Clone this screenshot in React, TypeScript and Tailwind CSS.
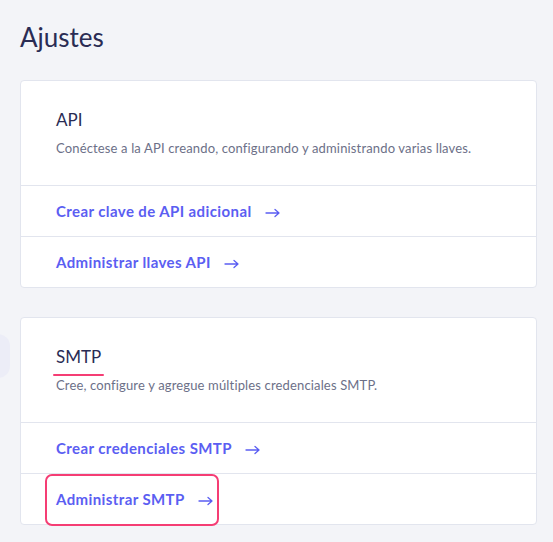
import React from "react";

interface LinkItem {
	label: string;
	highlighted?: boolean;
}

interface SectionProps {
	title: string;
	description: string;
	links: LinkItem[];
	underlineTitle?: boolean;
}

function Arrow() {
	return (
		<svg width="16" height="10" viewBox="0 0 16 10" fill="none" className="ml-[13px] mt-[3px]">
			<path d="M1 5h13M10 1.5L14 5l-4 3.5" stroke="#5b5ef2" strokeWidth="1.3" strokeLinecap="round" strokeLinejoin="round" />
		</svg>
	);
}

function Section({ title, description, links, underlineTitle }: SectionProps) {
	return (
		<div className="bg-white border border-[#e2e5ee] rounded-[4px]">
			<div className="px-[35px] pt-[27px] pb-[28px]">
				<div className="relative inline-block">
					<h2 className="text-[17px] leading-[22px] text-[#2a2c54]">{title}</h2>
					{underlineTitle && (
						<div className="absolute left-[-3px] right-[-3px] top-[28px] h-[2px] bg-[#f53d74] rounded-full" />
					)}
				</div>
				<p className="mt-[7px] text-[13px] leading-[18px] tracking-[0.15px] text-[#6c7088]">{description}</p>
			</div>
			{links.map((link) => (
				<div key={link.label} className="relative border-t border-[#e2e5ee] h-[51px] flex items-center px-[35px]">
					<span className="text-[15px] font-bold tracking-[0.4px] text-[#5b5ef2]">{link.label}</span>
					<Arrow />
					{link.highlighted && (
						<div className="absolute left-[24px] top-[0px] w-[174px] h-[52px] border-2 border-[#f53d74] rounded-[7px]" />
					)}
				</div>
			))}
		</div>
	);
}

export default function App() {
	return (
		<div className="relative min-h-[542px] bg-[#f3f4f8] overflow-hidden px-5 pt-[21px] pb-4" style={{ fontFamily: "Lato, 'Noto Sans', sans-serif" }}>
			<div className="absolute left-[-14px] top-[334px] w-[24px] h-[44px] rounded-full bg-[#ecedf7]" />
			<h1 className="text-[26px] leading-[32px] text-[#2a2c54]">Ajustes</h1>
			<div className="mt-[27px] w-[517px] flex flex-col gap-[29px]">
				<Section
					title="API"
					description="Conéctese a la API creando, configurando y administrando varias llaves."
					links={[{ label: "Crear clave de API adicional" }, { label: "Administrar llaves API" }]}
				/>
				<Section
					title="SMTP"
					underlineTitle
					description="Cree, configure y agregue múltiples credenciales SMTP."
					links={[{ label: "Crear credenciales SMTP" }, { label: "Administrar SMTP", highlighted: true }]}
				/>
			</div>
		</div>
	);
}
